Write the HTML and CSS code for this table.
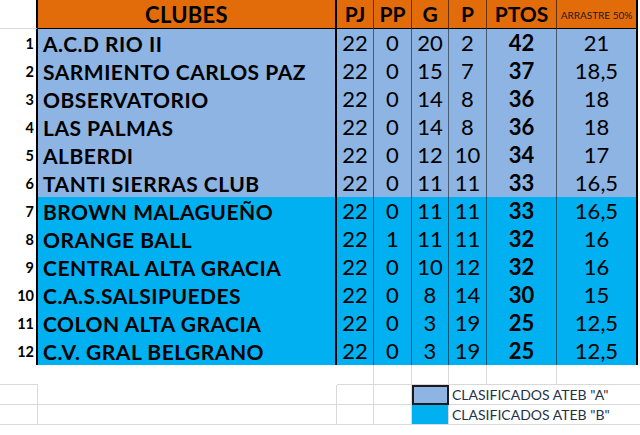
FILE: index.html
```html
<!DOCTYPE html>
<html lang="es">
<head>
<meta charset="utf-8">
<title>Tabla de posiciones</title>
<link rel="stylesheet" href="styles.css">
</head>
<body>
<div class="sheet">
  <div class="row head">
    <div class="rn"></div>
    <div class="club">CLUBES</div>
    <div class="num">PJ</div>
    <div class="num">PP</div>
    <div class="num">G</div>
    <div class="num">P</div>
    <div class="num pts">PTOS</div>
    <div class="arr small">ARRASTRE 50%</div>
    <div class="ext"></div>
  </div>
  <div class="row a"><div class="rn">1</div><div class="club">A.C.D RIO II</div><div class="num">22</div><div class="num">0</div><div class="num">20</div><div class="num">2</div><div class="num pts">42</div><div class="arr">21</div><div class="ext"></div></div>
  <div class="row a"><div class="rn">2</div><div class="club">SARMIENTO CARLOS PAZ</div><div class="num">22</div><div class="num">0</div><div class="num">15</div><div class="num">7</div><div class="num pts">37</div><div class="arr">18,5</div><div class="ext"></div></div>
  <div class="row a"><div class="rn">3</div><div class="club">OBSERVATORIO</div><div class="num">22</div><div class="num">0</div><div class="num">14</div><div class="num">8</div><div class="num pts">36</div><div class="arr">18</div><div class="ext"></div></div>
  <div class="row a"><div class="rn">4</div><div class="club">LAS PALMAS</div><div class="num">22</div><div class="num">0</div><div class="num">14</div><div class="num">8</div><div class="num pts">36</div><div class="arr">18</div><div class="ext"></div></div>
  <div class="row a"><div class="rn">5</div><div class="club">ALBERDI</div><div class="num">22</div><div class="num">0</div><div class="num">12</div><div class="num">10</div><div class="num pts">34</div><div class="arr">17</div><div class="ext"></div></div>
  <div class="row a"><div class="rn">6</div><div class="club">TANTI SIERRAS CLUB</div><div class="num">22</div><div class="num">0</div><div class="num">11</div><div class="num">11</div><div class="num pts">33</div><div class="arr">16,5</div><div class="ext"></div></div>
  <div class="row b"><div class="rn">7</div><div class="club">BROWN MALAGUEÑO</div><div class="num">22</div><div class="num">0</div><div class="num">11</div><div class="num">11</div><div class="num pts">33</div><div class="arr">16,5</div><div class="ext"></div></div>
  <div class="row b"><div class="rn">8</div><div class="club">ORANGE BALL</div><div class="num">22</div><div class="num">1</div><div class="num">11</div><div class="num">11</div><div class="num pts">32</div><div class="arr">16</div><div class="ext"></div></div>
  <div class="row b"><div class="rn">9</div><div class="club">CENTRAL ALTA GRACIA</div><div class="num">22</div><div class="num">0</div><div class="num">10</div><div class="num">12</div><div class="num pts">32</div><div class="arr">16</div><div class="ext"></div></div>
  <div class="row b"><div class="rn">10</div><div class="club">C.A.S.SALSIPUEDES</div><div class="num">22</div><div class="num">0</div><div class="num">8</div><div class="num">14</div><div class="num pts">30</div><div class="arr">15</div><div class="ext"></div></div>
  <div class="row b"><div class="rn">11</div><div class="club">COLON ALTA GRACIA</div><div class="num">22</div><div class="num">0</div><div class="num">3</div><div class="num">19</div><div class="num pts">25</div><div class="arr">12,5</div><div class="ext"></div></div>
  <div class="row b last"><div class="rn">12</div><div class="club">C.V. GRAL BELGRANO</div><div class="num">22</div><div class="num">0</div><div class="num">3</div><div class="num">19</div><div class="num pts">25</div><div class="arr">12,5</div><div class="ext"></div></div>

  <div class="row gap">
    <div class="g rnb"></div>
    <div class="g"></div>
    <div class="g rb bb"></div>
    <div class="g rb bb"></div>
    <div class="g rb bb"></div>
    <div class="g rb bb"></div>
    <div class="g rb bb"></div>
    <div class="g bb"></div>
    <div class="g bb"></div>
  </div>
  <div class="row leg">
    <div class="g rb bb"></div>
    <div class="g rb bb"></div>
    <div class="g rb bb"></div>
    <div class="g rb bb"></div>
    <div class="swatch sa"></div>
    <div class="label">CLASIFICADOS ATEB "A"</div>
  </div>
  <div class="row leg">
    <div class="g rb bb"></div>
    <div class="g rb bb"></div>
    <div class="g rb bb"></div>
    <div class="g rb bb"></div>
    <div class="swatch sb"></div>
    <div class="label">CLASIFICADOS ATEB "B"</div>
  </div>
</div>
</body>
</html>
```

FILE: styles.css
```css
* { box-sizing: border-box; }

html, body {
  margin: 0;
  padding: 0;
  background: #ffffff;
}

body {
  font-family: Lato, "Open Sans", sans-serif;
  color: #000;
  width: 640px;
  height: 435px;
  overflow: hidden;
}

.sheet {
  display: flex;
  flex-direction: column;
}

.row {
  display: grid;
  grid-template-columns: 38px 299px 37px 38px 37px 38px 70px 81px 2px;
  height: 28px;
}

.row > div {
  display: flex;
  align-items: center;
  white-space: nowrap;
}

/* row numbers */
.rn {
  justify-content: flex-end;
  padding-right: 2px;
  font-weight: 700;
  font-size: 14.5px;
  background: #fff;
  border-right: 2px solid #000;
  border-bottom: 1px solid #d9d9d9;
}

.club {
  padding-left: 5px;
  font-weight: 700;
  font-size: 21px;
  letter-spacing: 0.5px;
  border-right: 2px solid #000;
  border-bottom: 1px solid rgba(0, 0, 0, 0.78);
}

.num, .arr {
  justify-content: center;
  font-size: 22px;
  border-right: 1px solid rgba(0, 0, 0, 0.5);
  border-bottom: 1px solid rgba(0, 0, 0, 0.78);
  padding-bottom: 2px;
}

.arr {
  border-right: 2px solid #000;
}

.pts { font-weight: 700; }

.ext { background: #fff; }

/* header */
.head { height: 29px; }
.head .club, .head .num, .head .arr {
  background: #e36c0a;
  border-bottom: 1px solid #000;
}
.head .club {
  justify-content: center;
  padding-left: 0;
  font-size: 22px;
  letter-spacing: 0.3px;
}
.head .num { font-weight: 700; font-size: 21px; }
.head .num { border-right-color: rgba(0, 0, 0, 0.55); }
.head .small {
  font-size: 10px;
  font-weight: 400;
  padding-top: 4px;
  color: #1a1a1a;
  letter-spacing: 0;
}

.a .club, .a .num, .a .arr { background: #8db4e2; }
.b .club, .b .num, .b .arr { background: #00b0f0; }

.last .club, .last .num, .last .arr { border-bottom: 1px solid #000; }

/* empty grid area */
.gap, .leg { height: 20px; }

.g { background: #fff; }
.rb { border-right: 1px solid #d9d9d9; }
.bb { border-bottom: 1px solid #d9d9d9; }
.rnb { border-bottom: 1px solid #d9d9d9; }

.swatch {
  border-bottom: 1px solid #d9d9d9;
  border-right: 1px solid #d9d9d9;
}
.sa {
  background: #8db4e2;
  border: 2px solid #1a1a1a;
}
.sb { background: #00b0f0; }

.label {
  grid-column: 6 / -1;
  padding-left: 3px;
  font-size: 14px;
  color: #25324a;
  border-bottom: 1px solid #d9d9d9;
}
```
